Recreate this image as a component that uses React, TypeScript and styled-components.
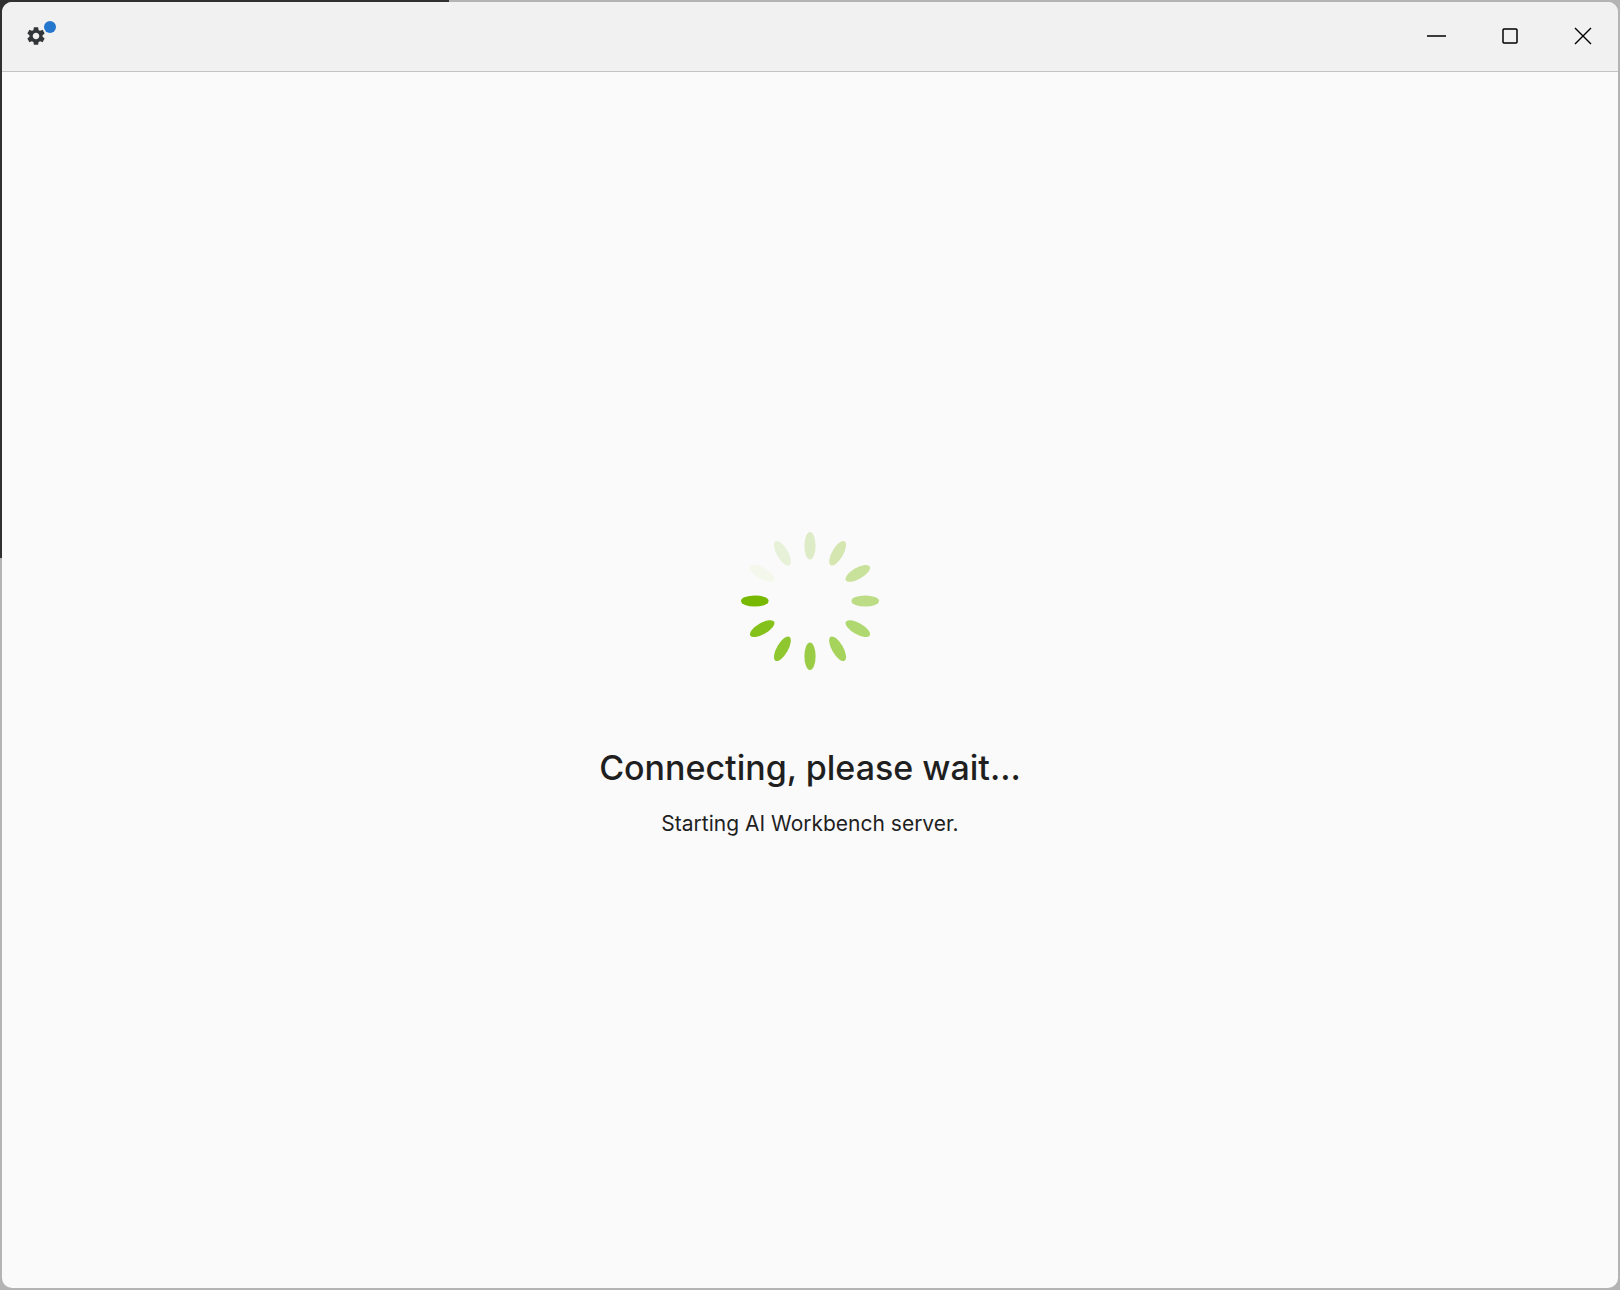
import React from "react";
import styled, { createGlobalStyle } from "styled-components";
import { MdSettings } from "react-icons/md";

const GlobalStyle = createGlobalStyle`
  *, *::before, *::after { box-sizing: border-box; }
  body { margin: 0; font-family: Inter, "Noto Sans", sans-serif; color: #1f1f1f; }
`;

const Desktop = styled.div`
  display: flex;
  min-height: 100vh;
  padding: 2px;
  background-color: #b4b4b4;
  background-image: linear-gradient(#303030, #303030), linear-gradient(#303030, #303030);
  background-size: 449px 2px, 12px 558px;
  background-repeat: no-repeat;
`;

const AppWindow = styled.div`
  flex: 1;
  display: flex;
  flex-direction: column;
  overflow: hidden;
  border-radius: 10px;
  background: #fafafa;
`;

const TitleBar = styled.header`
  display: flex;
  align-items: center;
  justify-content: space-between;
  height: 70px;
  padding: 0 0 2px 10px;
  background: #f1f1f1;
  border-bottom: 1px solid #c4c4c4;
`;

const IconButton = styled.button`
  display: flex;
  align-items: center;
  justify-content: center;
  padding: 0;
  border: 0;
  background: transparent;
  cursor: pointer;
`;

const SettingsButton = styled(IconButton)`
  position: relative;
  width: 48px;
  height: 48px;
  color: #333638;
`;

const NotificationDot = styled.span`
  position: absolute;
  top: 9px;
  right: 4px;
  width: 12px;
  height: 12px;
  border-radius: 50%;
  background: #2577cd;
`;

const WindowControls = styled.div`
  display: flex;
  align-self: stretch;
  gap: 3px;
`;

const ControlButton = styled(IconButton)`
  width: 70px;
  color: #000000;
`;

const Content = styled.main`
  flex: 1;
  display: flex;
  flex-direction: column;
  align-items: center;
  justify-content: center;
  padding-top: 12px;
  text-align: center;
`;

const Spinner = styled.svg`
  display: block;
  margin-bottom: 74px;
`;

const Heading = styled.h1`
  margin: 0;
  font-size: 34px;
  font-weight: 500;
  line-height: 48px;
`;

const Status = styled.p`
  margin: 16px 0 0;
  font-size: 21px;
  font-weight: 400;
  line-height: 32px;
`;

const PETALS = [
  "#deebc7", "#d5e6b1", "#c9e29b", "#bcdd86", "#b0d870", "#a5d35b",
  "#9acd45", "#8fc730", "#84c11b", "#76b900", "#f4f7ec", "#e7f1d8",
];

export default function App() {
  return (
    <>
      <GlobalStyle />
      <Desktop>
        <AppWindow>
          <TitleBar>
            <SettingsButton type="button" aria-label="Settings">
              <MdSettings size={22} />
              <NotificationDot />
            </SettingsButton>
            <WindowControls>
              <ControlButton type="button" aria-label="Minimize">
                <svg width="20" height="20" viewBox="0 0 20 20">
                  <path d="M0 10h19" stroke="#3c3c3c" strokeWidth="2" />
                </svg>
              </ControlButton>
              <ControlButton type="button" aria-label="Maximize">
                <svg width="20" height="20" viewBox="0 0 20 20" fill="none">
                  <rect x="3" y="3" width="14" height="14" rx="1" stroke="currentColor" strokeWidth="1.5" />
                </svg>
              </ControlButton>
              <ControlButton type="button" aria-label="Close">
                <svg width="20" height="20" viewBox="0 0 20 20" fill="none">
                  <path d="M2 2l16 16M18 2L2 18" stroke="currentColor" strokeWidth="1.4" />
                </svg>
              </ControlButton>
            </WindowControls>
          </TitleBar>
          <Content>
            <Spinner width="138" height="138" viewBox="0 0 138 138" role="img" aria-label="Loading">
              {PETALS.map((color, i) => (
                <ellipse
                  key={color}
                  cx="69"
                  cy="13.8"
                  rx="5.6"
                  ry="13.8"
                  fill={color}
                  transform={`rotate(${i * 30} 69 69)`}
                />
              ))}
            </Spinner>
            <Heading>Connecting, please wait...</Heading>
            <Status role="status">Starting AI Workbench server.</Status>
          </Content>
        </AppWindow>
      </Desktop>
    </>
  );
}
